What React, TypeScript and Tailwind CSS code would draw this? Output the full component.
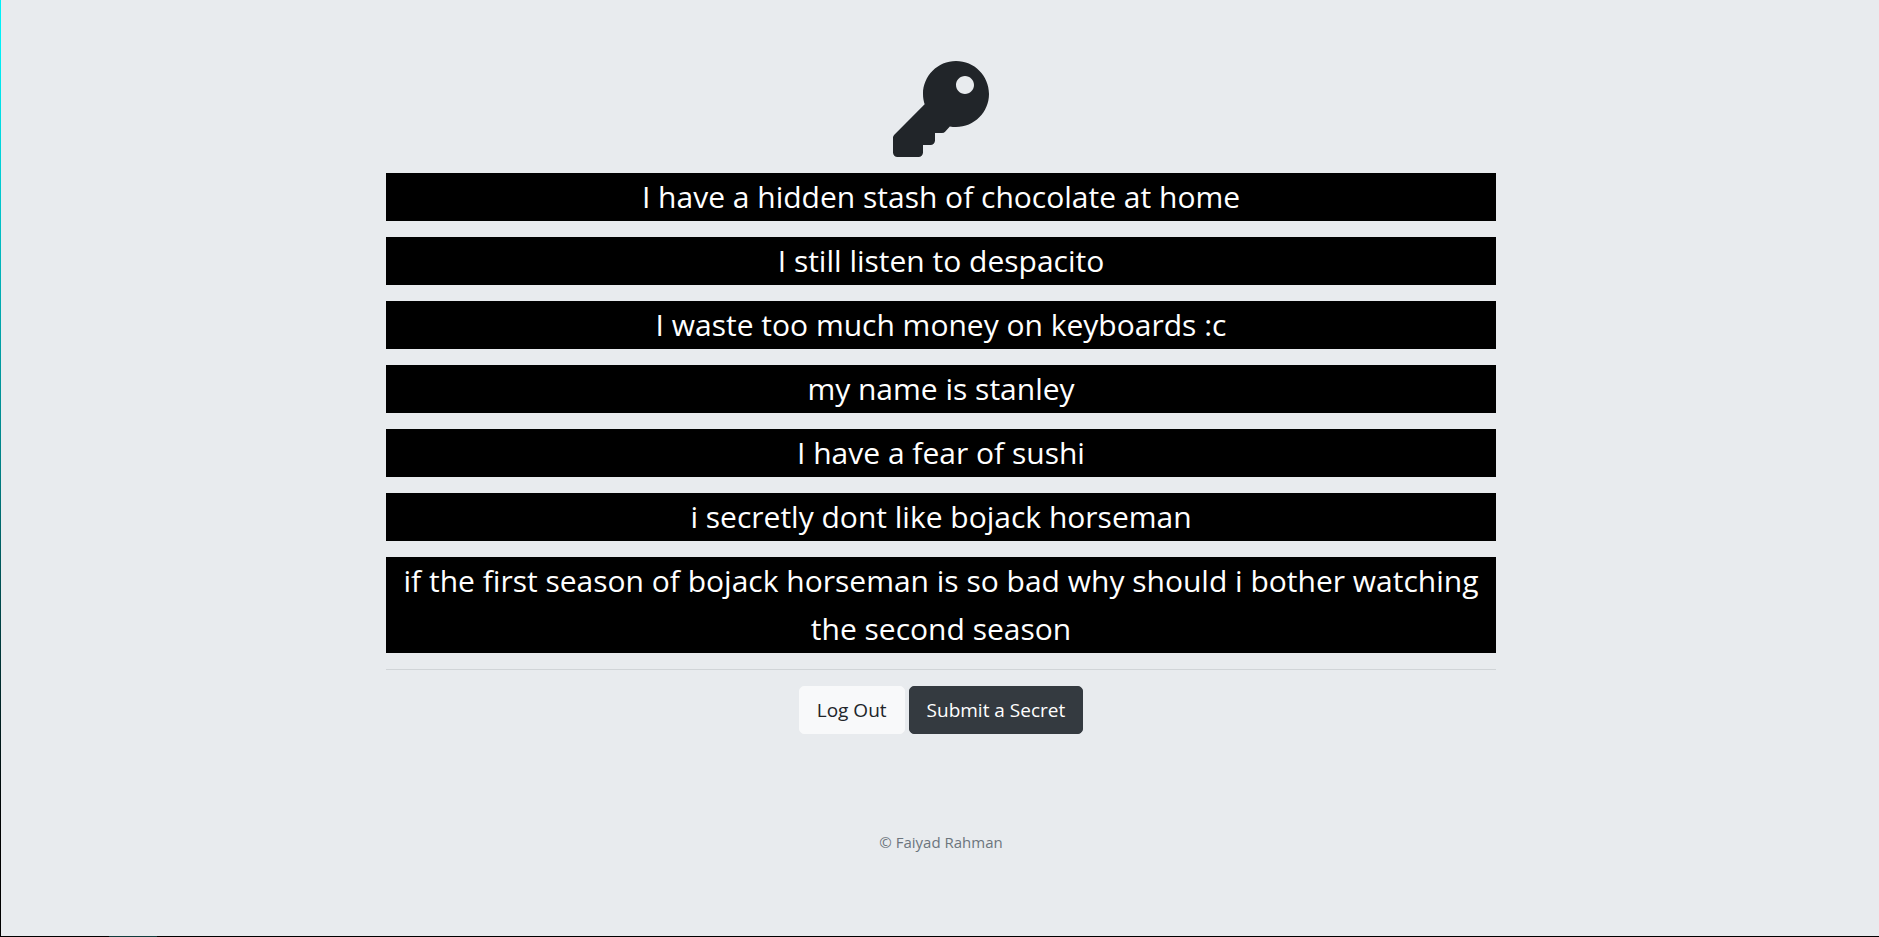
import { FaKey } from "react-icons/fa";

const secrets: string[] = [
  "I have a hidden stash of chocolate at home",
  "I still listen to despacito",
  "I waste too much money on keyboards :c",
  "my name is stanley",
  "I have a fear of sushi",
  "i secretly dont like bojack horseman",
  "if the first season of bojack horseman is so bad why should i bother watching the second season",
];

export default function App() {
  return (
    <div className="flex min-h-screen flex-col bg-[#e8ebee] font-['Segoe_UI','Open_Sans',sans-serif] text-[#212529]">
      <div className="flex flex-1">
        <div className="w-px bg-linear-to-b from-[#00f0f8] from-5% via-[#008085] via-50% to-black to-95%" />
        <div className="flex-1 pt-[61px] pl-0.5">
          <main className="mx-auto w-full max-w-[1110px] text-center">
            <FaKey className="mx-auto mb-4 size-24" aria-hidden="true" />
            {secrets.map((secret) => (
              <p key={secret} className="mb-4 bg-black text-[30px] leading-[48px] text-white">
                {secret}
              </p>
            ))}
            <hr className="mb-4 border-t border-[#d0d4d7]" />
            <div className="flex justify-center gap-1 text-[19px] leading-[30px]">
              <a href="#logout" className="rounded-[5px] border border-[#f8f9fa] bg-[#f8f9fa] px-[17px] py-2">
                Log Out
              </a>
              <a href="#submit" className="rounded-[5px] border border-[#343a40] bg-[#343a40] px-[17px] py-2 text-white">
                Submit a Secret
              </a>
            </div>
          </main>
          <footer className="mt-24 pb-16 text-center text-[15px] leading-6 text-[#6c757d]">
            © Faiyad Rahman
          </footer>
        </div>
      </div>
      <div className="h-px bg-black pl-[109px]">
        <div className="h-px w-12 bg-[#123c3c]" />
      </div>
    </div>
  );
}
